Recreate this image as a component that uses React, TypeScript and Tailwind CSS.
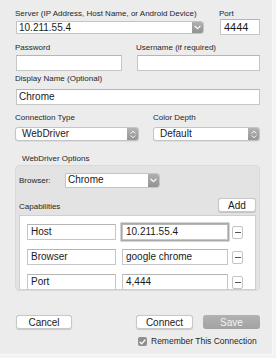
import React from 'react';

const font = { fontFamily: '"Liberation Sans", Arial, sans-serif' };

function Down() {
  return (
    <svg width="7" height="5" viewBox="0 0 7 5" fill="none">
      <path d="M1 1.2l2.5 2.4L6 1.2" stroke="white" strokeWidth="1.2" strokeLinecap="round" strokeLinejoin="round" />
    </svg>
  );
}

function UpDown() {
  return (
    <svg width="6" height="9" viewBox="0 0 6 9" fill="none">
      <path d="M1 3.2L3 1.2l2 2M1 5.8l2 2 2-2" stroke="white" strokeWidth="1" strokeLinecap="round" strokeLinejoin="round" />
    </svg>
  );
}

function Label({ children, className = '' }: { children: React.ReactNode; className?: string }) {
  return <div className={`h-[8px] text-[8px] leading-[8px] text-[#262626] whitespace-nowrap ${className}`}>{children}</div>;
}

function Field({ value = '', className = '' }: { value?: string; className?: string }) {
  return (
    <div className={`h-[16px] bg-white border border-[#c6c6c6] border-t-[#b5b5b5] px-[2px] text-[10px] leading-[14px] text-[#1a1a1a] whitespace-nowrap ${className}`}>
      {value}
    </div>
  );
}

function Popup({ value, className = '' }: { value: string; className?: string }) {
  return (
    <div className={`h-[14px] flex bg-white rounded-[3px] border border-[#c4c4c4] shadow-[0_0.5px_0.5px_rgba(0,0,0,0.12)] overflow-hidden ${className}`}>
      <div className="flex-1 pl-[6px] text-[10px] leading-[12px] text-[#1a1a1a]">{value}</div>
      <div className="w-[11px] flex items-center justify-center bg-gradient-to-b from-[#b4b4b4] to-[#959595]">
        <UpDown />
      </div>
    </div>
  );
}

function Combo({ value, className = '', h = 'h-[14px]' }: { value: string; className?: string; h?: string }) {
  return (
    <div className={`${h} flex bg-white border border-[#c4c4c4] rounded-r-[3px] overflow-hidden ${className}`}>
      <div className="flex-1 pl-[2px] text-[10px] leading-[12px] text-[#1a1a1a] whitespace-nowrap">{value}</div>
      <div className="w-[11px] flex items-center justify-center bg-gradient-to-b from-[#b0b0b0] to-[#929292]">
        <Down />
      </div>
    </div>
  );
}

function Btn({ children, className = '' }: { children: React.ReactNode; className?: string }) {
  return (
    <div className={`h-[14px] flex items-center justify-center bg-white rounded-[3px] border border-[#c8c8c8] shadow-[0_0.5px_1px_rgba(0,0,0,0.15)] text-[10px] text-[#1a1a1a] ${className}`}>
      {children}
    </div>
  );
}

function CapRow({ name, value, focused = false }: { name: string; value: string; focused?: boolean }) {
  return (
    <div className="flex items-center shrink-0">
      <Field value={name} className="w-[89px] pl-[3px]" />
      <Field value={value} className={`w-[106px] ml-[6px] pl-[3px] ${focused ? 'shadow-[0_0_0_1.5px_#a9a9a9]' : ''}`} />
      <div className="w-[11px] h-[13px] ml-[4px] bg-white border border-[#c4c4c4] rounded-[2px] flex items-center justify-center">
        <div className="w-[6px] h-[1px] bg-[#555]" />
      </div>
    </div>
  );
}

export default function App() {
  return (
    <div className="w-[276px] h-[358px] bg-[#f3f3f3] overflow-hidden" style={font}>
      <div className="w-[273px] h-[355px] bg-[#ececec] border-r border-b border-[#f8f8f8] pl-[15px] pr-[12px] pt-[10px] flex flex-col">
        <div className="flex">
          <div className="w-[189px]">
            <Label>Server (IP Address, Host Name, or Android Device)</Label>
            <Combo value="10.211.55.4" className="mt-[3px] ml-[1px]" h="h-[13px]" />
          </div>
          <div className="w-[41px] ml-[15px]">
            <Label>Port</Label>
            <Field value="4444" className="mt-[1px] ml-[1px] pl-[3px] text-[11px]" />
          </div>
        </div>

        <div className="flex mt-[9px]">
          <div className="w-[107px]">
            <Label>Password</Label>
            <Field className="mt-[3px] ml-[1px]" />
          </div>
          <div className="w-[124px] ml-[14px]">
            <Label>Username (if required)</Label>
            <Field className="mt-[3px] ml-[1px]" />
          </div>
        </div>

        <Label className="mt-[4px]">Display Name (Optional)</Label>
        <Field value="Chrome" className="mt-[6px] ml-[1px] pl-[2px]" />

        <div className="flex mt-[9px]">
          <div className="w-[124px]">
            <Label>Connection Type</Label>
            <Popup value="WebDriver" className="mt-[5px]" />
          </div>
          <div className="w-[107px] ml-[14px]">
            <Label>Color Depth</Label>
            <Popup value="Default" className="mt-[5px]" />
          </div>
        </div>

        <Label className="mt-[14px] ml-[7px]">WebDriver Options</Label>
        <div className="mt-[2px] h-[126px] bg-[#e3e3e3] border border-[#dadada] rounded-[4px] pt-[7px] px-[3px] flex flex-col">
          <div className="flex items-center">
            <Label className="w-[46px]">Browser:</Label>
            <Combo value="Chrome" className="w-[95px]" h="h-[15px]" />
          </div>
          <div className="flex items-end justify-between mt-[10px]">
            <Label className="mb-[1px]">Capabilities</Label>
            <Btn className="w-[38px] h-[13px]">Add</Btn>
          </div>
          <div className="mt-[3px] h-[75px] bg-white border border-[#cfcfcf] pt-[8px] pl-[7px] flex flex-col gap-[9px] overflow-hidden">
            <CapRow name="Host" value="10.211.55.4" focused />
            <CapRow name="Browser" value="google chrome" />
            <CapRow name="Port" value="4,444" />
          </div>
        </div>

        <div className="flex mt-[24px]">
          <Btn className="w-[56px] ml-[1px]">Cancel</Btn>
          <Btn className="w-[57px] ml-[64px]">Connect</Btn>
          <div className="w-[57px] ml-[10px] h-[14px] rounded-[3px] bg-gradient-to-b from-[#b2b2b2] to-[#a2a2a2] flex items-center justify-center text-[10px] text-[#f4f4f4]">
            Save
          </div>
        </div>

        <div className="flex items-center mt-[8px] ml-[123px]">
          <div className="w-[9px] h-[9px] rounded-[2px] bg-[#8f8f8f] flex items-center justify-center">
            <svg width="7" height="6" viewBox="0 0 7 6" fill="none">
              <path d="M1 3.2l1.7 1.6L6 1" stroke="white" strokeWidth="1.2" strokeLinecap="round" strokeLinejoin="round" />
            </svg>
          </div>
          <div className="ml-[4px] text-[8.5px] leading-[9px] text-[#262626] whitespace-nowrap">Remember This Connection</div>
        </div>
      </div>
    </div>
  );
}
